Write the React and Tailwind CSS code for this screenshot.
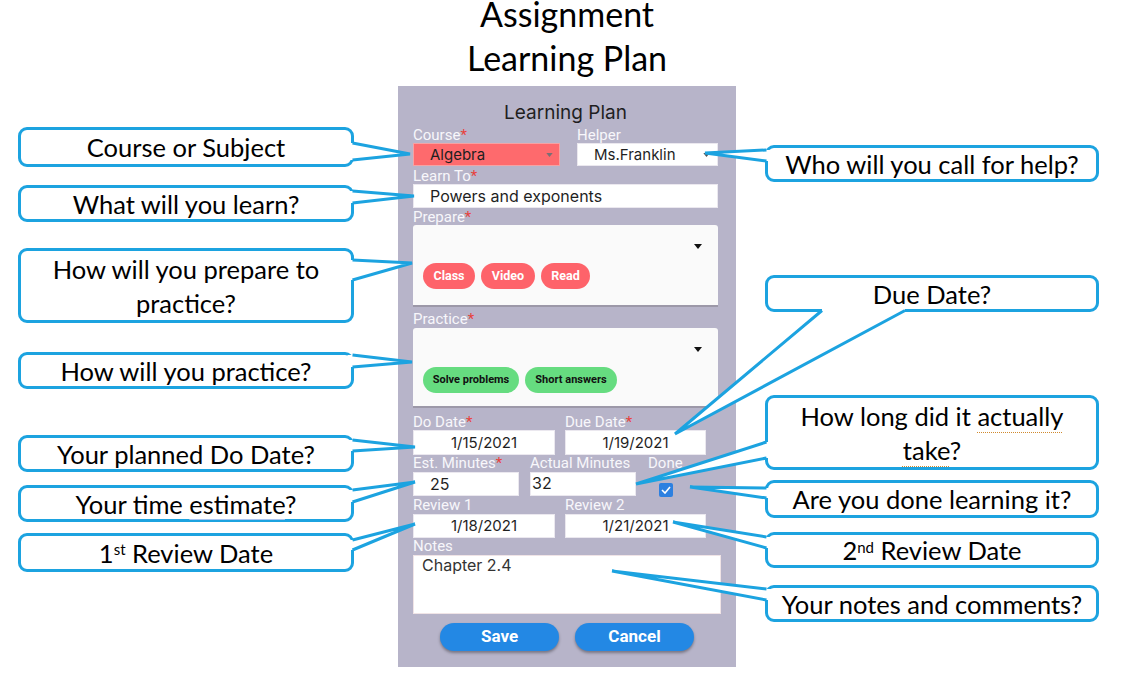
import React from "react";

const BLUE = "#1ca3e0";

function Caret({ className, color }) {
  return (
    <svg className={className} width="8" height="5" viewBox="0 0 8 5">
      <path d="M0 0H8L4 5Z" fill={color} />
    </svg>
  );
}

function Label({ text, req, className }) {
  return (
    <div className={"font-['Roboto',sans-serif] text-[15px] text-[#f8f7fb] whitespace-nowrap " + className}>
      {text}
      {req && <span className="text-[#e8413c]">*</span>}
    </div>
  );
}

function Callout({ className, children }) {
  return (
    <div
      className={
        "absolute flex items-center justify-center rounded-[9px] border-[3px] border-[#1ca3e0] bg-white text-center font-['Lato',sans-serif] text-[25.5px] leading-[34px] text-black " +
        className
      }
    >
      <div>{children}</div>
    </div>
  );
}

const POINTERS = [
  { a: [352.5, 143], b: [352.5, 160], t: [410, 154], s: "L" },
  { a: [352.5, 191], b: [352.5, 203], t: [414, 196], s: "L" },
  { a: [352.5, 260], b: [352.5, 280], t: [412, 263], s: "L" },
  { a: [352.5, 355], b: [352.5, 367], t: [412, 362], s: "L" },
  { a: [352.5, 440], b: [352.5, 451], t: [415, 447], s: "L" },
  { a: [352.5, 490], b: [352.5, 502], t: [415, 482], s: "L" },
  { a: [352.5, 540], b: [352.5, 550], t: [415, 524], s: "L" },
  { a: [766.5, 150], b: [766.5, 161], t: [705, 153], s: "R" },
  { a: [822, 310.5], b: [905, 310.5], t: [675, 434], s: "T" },
  { a: [766.5, 442], b: [766.5, 458], t: [636, 484], s: "R" },
  { a: [766.5, 488], b: [766.5, 498], t: [690, 487], s: "R" },
  { a: [766.5, 537], b: [766.5, 548], t: [673, 522], s: "R" },
  { a: [766.5, 589], b: [766.5, 600], t: [612, 571], s: "R" },
];

function shift(p, s) {
  if (s === "L") return [p[0] - 5, p[1]];
  if (s === "R") return [p[0] + 5, p[1]];
  return [p[0], p[1] - 5];
}

function Pointers() {
  return (
    <svg className="pointer-events-none absolute left-0 top-0" width="1122" height="673" viewBox="0 0 1122 673">
      {POINTERS.map((p, i) => {
        const a2 = shift(p.a, p.s);
        const b2 = shift(p.b, p.s);
        const fillPts = [a2, p.a, p.t, p.b, b2].map((q) => q.join(",")).join(" ");
        const linePts = [p.a, p.t, p.b].map((q) => q.join(",")).join(" ");
        return (
          <g key={i}>
            <polygon points={fillPts} fill="#ffffff" />
            <polyline points={linePts} fill="none" stroke={BLUE} strokeWidth="3" strokeLinejoin="miter" />
          </g>
        );
      })}
    </svg>
  );
}

function Chip({ children, className }) {
  return (
    <div className={"flex h-[26px] items-center justify-center rounded-full font-['Roboto',sans-serif] font-bold " + className}>
      {children}
    </div>
  );
}

export default function App() {
  return (
    <div className="relative h-[673px] w-[1122px] overflow-hidden bg-white">
      <div className="ml-[398px] w-[338px]">
        <div className="flex h-[86px] flex-col items-center font-['Lato',sans-serif] text-[34px] text-black">
          <div className="h-[28px] leading-[28px]">Assignment</div>
          <div className="mt-[13px] h-[34px] leading-[34px]">Learning Plan</div>
        </div>

        <div className="h-[581px] bg-[#b7b4c9] pl-[15px] pr-[18px] pt-[16px]">
          <div className="h-[22px] text-center font-['Inter',sans-serif] text-[19px] leading-[22px] text-[#1f1f1f]">
            Learning Plan
          </div>

          <div className="mt-[3px] flex">
            <div className="w-[147px]">
              <Label text="Course" req className="h-[16px] leading-[16px]" />
              <div className="flex h-[23px] items-center justify-between border border-[#f5a2a3] bg-[#fe6a6d] pl-[16px] pr-[6px] font-['Inter',sans-serif] text-[15px] leading-[21px] text-[#1f1f1f]">
                <span>Algebra</span>
                <Caret color="#7a6f74" className="h-[4px] w-[7px]" />
              </div>
            </div>
            <div className="ml-[17px] w-[141px]">
              <Label text="Helper" className="h-[16px] leading-[16px]" />
              <div className="flex h-[23px] items-center justify-between border border-[#ebe8ef] bg-white pl-[16px] pr-[7px] font-['Inter',sans-serif] text-[15px] leading-[21px] text-[#1f1f1f]">
                <span>Ms.Franklin</span>
                <Caret color="#555555" className="h-[4px] w-[7px]" />
              </div>
            </div>
          </div>

          <Label text="Learn To" req className="mt-[2px] h-[16px] leading-[16px]" />
          <div className="h-[24px] w-[305px] border border-[#ebe8ef] bg-white pl-[16px] font-['Inter',sans-serif] text-[16px] leading-[22px] text-[#1f1f1f]">
            Powers and exponents
          </div>

          <Label text="Prepare" req className="mt-[1px] h-[16px] leading-[16px]" />
          <div className="flex h-[82px] w-[305px] flex-col rounded-t-[3px] border-b-2 border-[#9c98a8] bg-[#fafafa]">
            <div className="flex justify-end pr-[16px] pt-[19px]">
              <Caret color="#111111" className="h-[5px] w-[8px]" />
            </div>
            <div className="mt-[14px] flex gap-[6px] pl-[10px]">
              <Chip className="w-[52px] bg-[#fe636a] text-[12.5px] text-white">Class</Chip>
              <Chip className="w-[54px] bg-[#fe636a] text-[12.5px] text-white">Video</Chip>
              <Chip className="w-[49px] bg-[#fe636a] text-[12.5px] text-white">Read</Chip>
            </div>
          </div>

          <Label text="Practice" req className="mt-[4px] h-[17px] leading-[17px]" />
          <div className="flex h-[80px] w-[305px] flex-col rounded-t-[3px] border-b-2 border-[#9c98a8] bg-[#fafafa]">
            <div className="flex justify-end pr-[16px] pt-[19px]">
              <Caret color="#111111" className="h-[5px] w-[8px]" />
            </div>
            <div className="mt-[15px] flex gap-[6px] pl-[10px]">
              <Chip className="w-[96px] bg-[#66dc80] text-[11px] text-[#111]">Solve problems</Chip>
              <Chip className="w-[92px] bg-[#66dc80] text-[11px] text-[#111]">Short answers</Chip>
            </div>
          </div>

          <div className="mt-[6px] flex">
            <div className="w-[142px]">
              <Label text="Do Date" req className="h-[16px] leading-[16px]" />
              <div className="h-[25px] border border-[#ebe8ef] bg-white text-center font-['Inter',sans-serif] text-[15px] leading-[23px] text-[#1f1f1f]">
                1/15/2021
              </div>
            </div>
            <div className="ml-[10px] w-[141px]">
              <Label text="Due Date" req className="h-[16px] leading-[16px]" />
              <div className="h-[25px] border border-[#ebe8ef] bg-white text-center font-['Inter',sans-serif] text-[15px] leading-[23px] text-[#1f1f1f]">
                1/19/2021
              </div>
            </div>
          </div>

          <div className="flex">
            <div className="w-[106px]">
              <Label text="Est. Minutes" req className="h-[17px] leading-[17px]" />
              <div className="h-[24px] border border-[#ebe8ef] bg-white pl-[16px] font-['Inter',sans-serif] text-[16px] leading-[22px] text-[#1f1f1f]">
                25
              </div>
            </div>
            <div className="ml-[11px] w-[106px]">
              <Label text="Actual Minutes" className="h-[17px] leading-[17px]" />
              <div className="h-[24px] border border-[#ebe8ef] bg-white pl-[1px] font-['Inter',sans-serif] text-[16px] leading-[20px] text-[#1f1f1f]">
                32
              </div>
            </div>
            <div className="ml-[12px]">
              <Label text="Done" className="h-[17px] leading-[17px]" />
              <div className="ml-[11px] mt-[11px] flex h-[14px] w-[14px] items-center justify-center rounded-[2px] bg-[#2d80e0]">
                <svg width="10" height="8" viewBox="0 0 10 8">
                  <polyline points="1,4 4,7 9,1" fill="none" stroke="#ffffff" strokeWidth="1.6" />
                </svg>
              </div>
            </div>
          </div>

          <div className="flex">
            <div className="w-[142px]">
              <Label text="Review 1" className="h-[17px] leading-[17px]" />
              <div className="h-[24px] border border-[#ebe8ef] bg-white text-center font-['Inter',sans-serif] text-[15px] leading-[22px] text-[#1f1f1f]">
                1/18/2021
              </div>
            </div>
            <div className="ml-[10px] w-[141px]">
              <Label text="Review 2" className="h-[17px] leading-[17px]" />
              <div className="h-[24px] border border-[#ebe8ef] bg-white text-center font-['Inter',sans-serif] text-[15px] leading-[22px] text-[#1f1f1f]">
                1/21/2021
              </div>
            </div>
          </div>

          <Label text="Notes" className="h-[17px] leading-[17px]" />
          <div className="h-[59px] w-[308px] border border-[#f0e4e6] bg-white pl-[8px] font-['Inter',sans-serif] text-[16px] leading-[19px] text-[#333]">
            Chapter 2.4
          </div>

          <div className="ml-[27px] mt-[9px] flex gap-[16px]">
            <div className="flex h-[28px] w-[119px] items-center justify-center rounded-full bg-[#2388e4] font-['Roboto',sans-serif] text-[17px] font-bold text-white shadow-[0_2px_3px_rgba(0,0,0,0.35)]">
              Save
            </div>
            <div className="flex h-[28px] w-[119px] items-center justify-center rounded-full bg-[#2388e4] font-['Roboto',sans-serif] text-[17px] font-bold text-white shadow-[0_2px_3px_rgba(0,0,0,0.35)]">
              Cancel
            </div>
          </div>
        </div>
      </div>

      <Callout className="left-[18px] top-[127px] h-[40px] w-[336px]">Course or Subject</Callout>
      <Callout className="left-[18px] top-[185px] h-[37px] w-[336px]">What will you learn?</Callout>
      <Callout className="left-[18px] top-[248px] h-[75px] w-[336px]">
        How will you prepare to
        <br />
        practice?
      </Callout>
      <Callout className="left-[18px] top-[352px] h-[37px] w-[336px]">How will you practice?</Callout>
      <Callout className="left-[18px] top-[435px] h-[37px] w-[336px]">Your planned Do Date?</Callout>
      <Callout className="left-[18px] top-[485px] h-[37px] w-[336px]">
        Your time{" "}
        <span className="underline decoration-[#a9c4f0] decoration-1 underline-offset-[5px]">estimate</span>?
      </Callout>
      <Callout className="left-[18px] top-[533px] h-[39px] w-[336px]">
        1<sup className="text-[15px]">st</sup> Review Date
      </Callout>

      <Callout className="left-[765px] top-[145px] h-[37px] w-[334px]">Who will you call for help?</Callout>
      <Callout className="left-[765px] top-[275px] h-[37px] w-[334px]">Due Date?</Callout>
      <Callout className="left-[765px] top-[395px] h-[75px] w-[334px]">
        How long did it{" "}
        <span className="underline decoration-[#d08a2e] decoration-dotted decoration-1 underline-offset-[6px]">actually</span>
        <br />
        <span className="underline decoration-[#d08a2e] decoration-dotted decoration-1 underline-offset-[6px]">take</span>?
      </Callout>
      <Callout className="left-[765px] top-[480px] h-[38px] w-[334px]">Are you done learning it?</Callout>
      <Callout className="left-[765px] top-[532px] h-[36px] w-[334px]">
        2<sup className="text-[15px]">nd</sup> Review Date
      </Callout>
      <Callout className="left-[765px] top-[585px] h-[37px] w-[334px]">Your notes and comments?</Callout>

      <Pointers />
    </div>
  );
}
